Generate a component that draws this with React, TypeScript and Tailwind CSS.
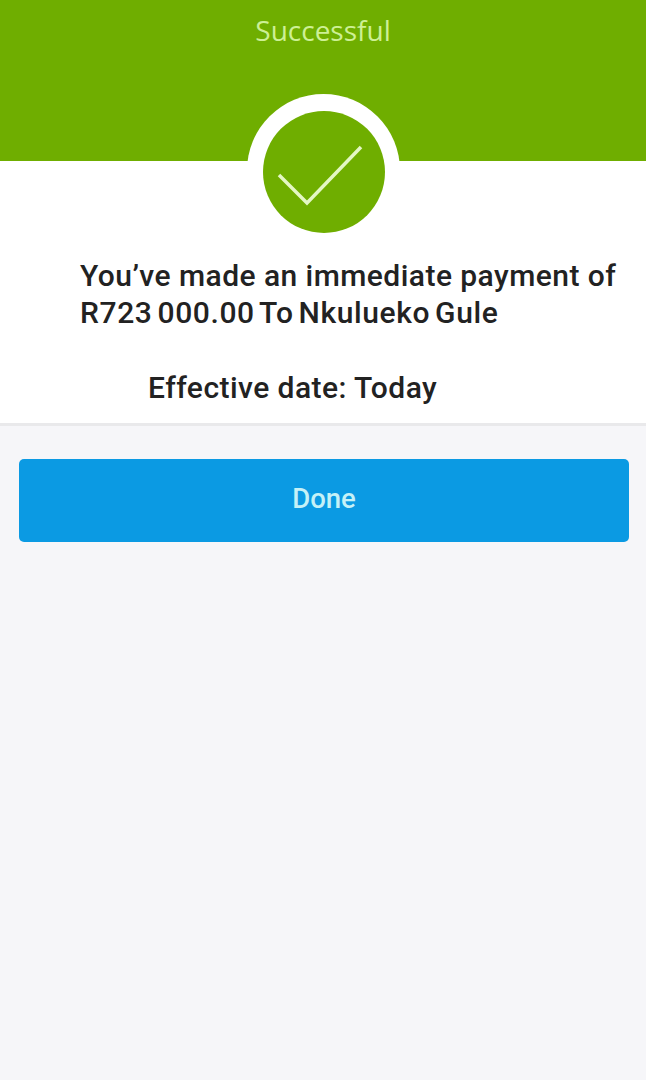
export default function App() {
  return (
    <div className="min-h-[1080px] bg-[#f6f6f9] font-['Roboto',sans-serif]">
      <header className="relative h-[161px] bg-[#6fae00] pt-[13px] text-center text-[28px] font-medium leading-[34px] text-[#cdf095] font-['Open_Sans',sans-serif]">
        Successful
        <div className="absolute left-[247px] top-[94px] flex h-[153px] w-[153px] justify-center rounded-full bg-white">
          <div className="mt-[17px] h-[122px] w-[122px] shrink-0 rounded-full bg-[#6fae00]">
            <svg width="122" height="122" viewBox="0 0 122 122" fill="none">
              <path d="M16 64 L44 92 L98 36" stroke="#e4f7c4" strokeWidth="3.5" />
            </svg>
          </div>
        </div>
      </header>

      <section className="h-[265px] border-b-[3px] border-[#e9e9eb] bg-white pl-[80px] pt-[96px] text-[30px] font-medium leading-[37px] tracking-[0.45px] text-[#222222]">
        <p className="whitespace-nowrap">You’ve made an immediate payment of</p>
        <p className="whitespace-nowrap tracking-[0.6px] [word-spacing:-3px]">R723 000.00 To Nkulueko Gule</p>
        <p className="mt-[38px] whitespace-nowrap pl-[68px]">Effective date: Today</p>
      </section>

      <div className="px-[19px] pt-[33px]">
        <button className="flex h-[83px] w-[610px] items-center justify-center rounded-[5px] bg-[#0b9ae3] pb-[3px] text-[27.5px] font-medium text-[#c5f1f7]">
          Done
        </button>
      </div>
    </div>
  )
}
